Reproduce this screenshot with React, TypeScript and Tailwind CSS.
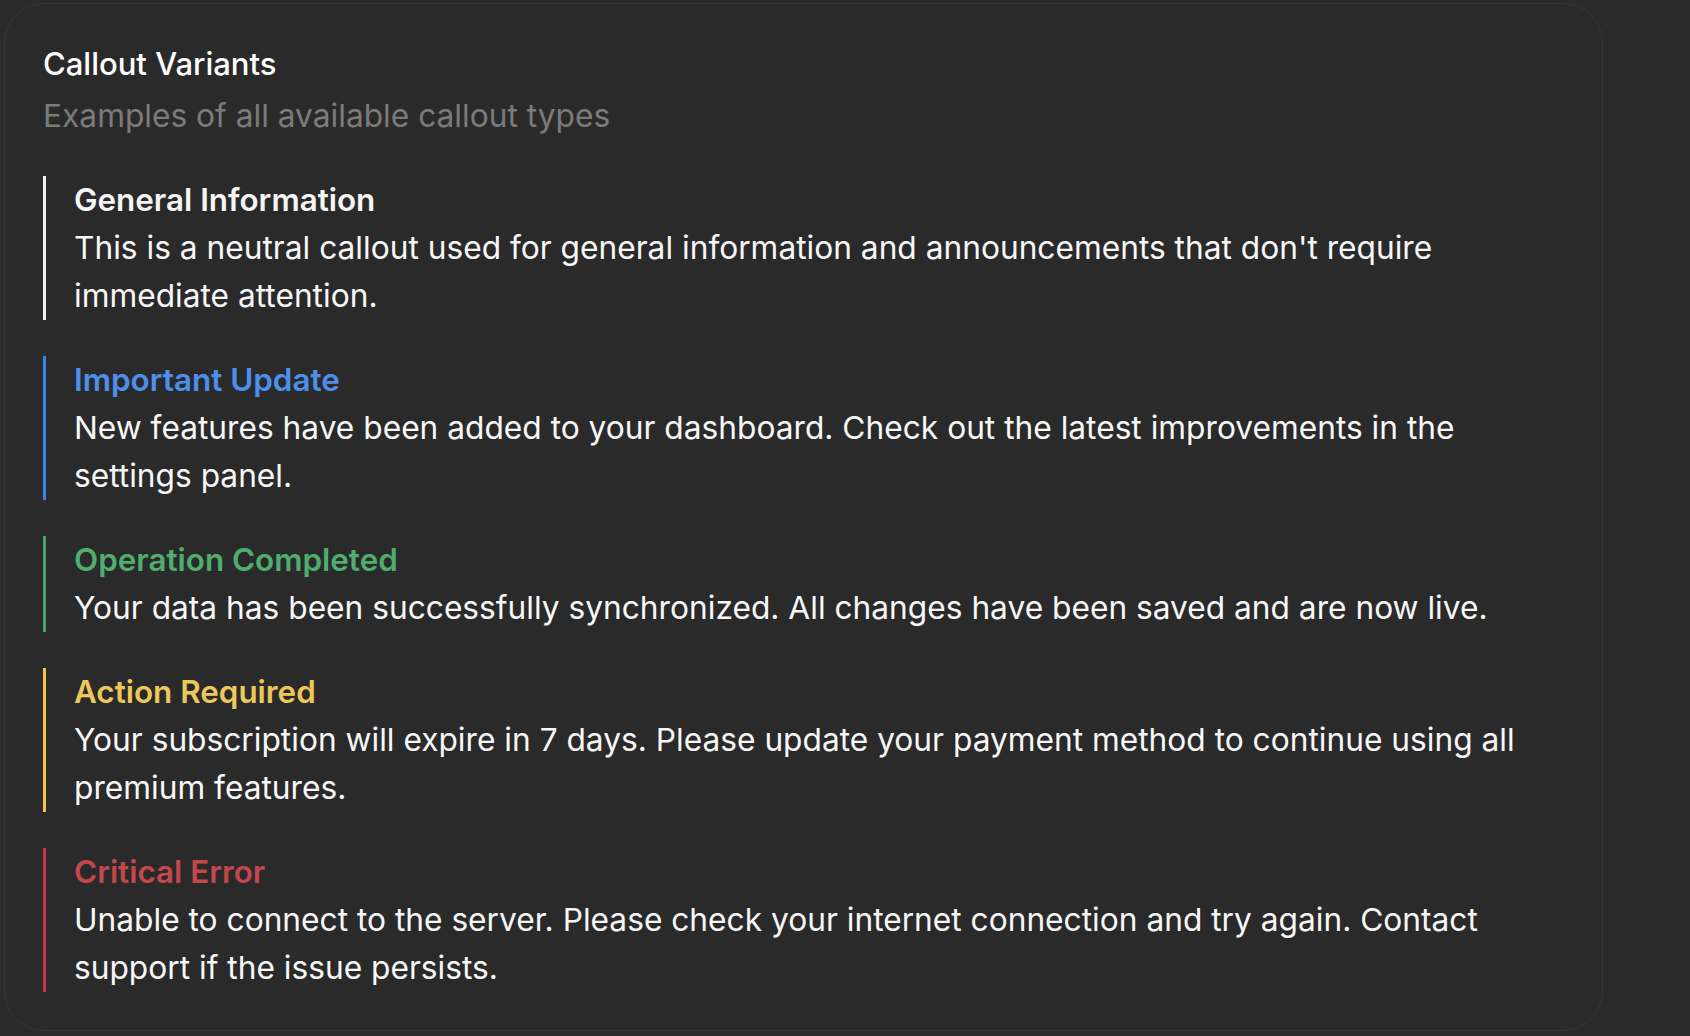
import React from 'react';

type Variant = 'neutral' | 'info' | 'success' | 'warning' | 'error';

interface CalloutItem {
  variant: Variant;
  title: string;
  body: string;
}

// bar + title colours per variant
const variantStyles: Record<Variant, { bar: string; title: string }> = {
  neutral: { bar: 'border-[#f2f2f2]', title: 'text-[#f5f5f5]' },
  info: { bar: 'border-[#3f82ee]', title: 'text-[#4f8fec]' },
  success: { bar: 'border-[#4ca36a]', title: 'text-[#4fae6e]' },
  warning: { bar: 'border-[#f0c63e]', title: 'text-[#ecc85a]' },
  error: { bar: 'border-[#c2393f]', title: 'text-[#c4474c]' },
};

const callouts: CalloutItem[] = [
  {
    variant: 'neutral',
    title: 'General Information',
    body: "This is a neutral callout used for general information and announcements that don't require immediate attention.",
  },
  {
    variant: 'info',
    title: 'Important Update',
    body: 'New features have been added to your dashboard. Check out the latest improvements in the settings panel.',
  },
  {
    variant: 'success',
    title: 'Operation Completed',
    body: 'Your data has been successfully synchronized. All changes have been saved and are now live.',
  },
  {
    variant: 'warning',
    title: 'Action Required',
    body: 'Your subscription will expire in 7 days. Please update your payment method to continue using all premium features.',
  },
  {
    variant: 'error',
    title: 'Critical Error',
    body: 'Unable to connect to the server. Please check your internet connection and try again. Contact support if the issue persists.',
  },
];

function Callout({ variant, title, body }: CalloutItem) {
  const s = variantStyles[variant];
  return (
    <div className={`border-l-[3px] pl-[28px] ${s.bar}`}>
      <div className={`text-[31.4px] font-semibold leading-[48px] ${s.title}`}>{title}</div>
      <p className="text-[31.7px] leading-[48px] text-[#f7f7f7]">{body}</p>
    </div>
  );
}

export default function App() {
  return (
    <div
      className="min-h-screen w-full bg-[#2a2a2a] pl-[4px] pt-[3px]"
      style={{ fontFamily: 'Inter, "Noto Sans", sans-serif' }}
    >
      <div className="w-[1599px] rounded-[40px] border border-[#353535] bg-[#2a2a2a] px-[38px] pt-[38px] pb-[38px]">
        <h2 className="text-[31px] font-medium leading-[44px] text-white">Callout Variants</h2>
        <p className="mt-[6px] text-[31.7px] leading-[47px] text-[#7b7b7b]">
          Examples of all available callout types
        </p>
        <div className="mt-[37px] flex flex-col gap-[36px]">
          {callouts.map((c) => (
            <Callout key={c.title} {...c} />
          ))}
        </div>
      </div>
    </div>
  );
}
